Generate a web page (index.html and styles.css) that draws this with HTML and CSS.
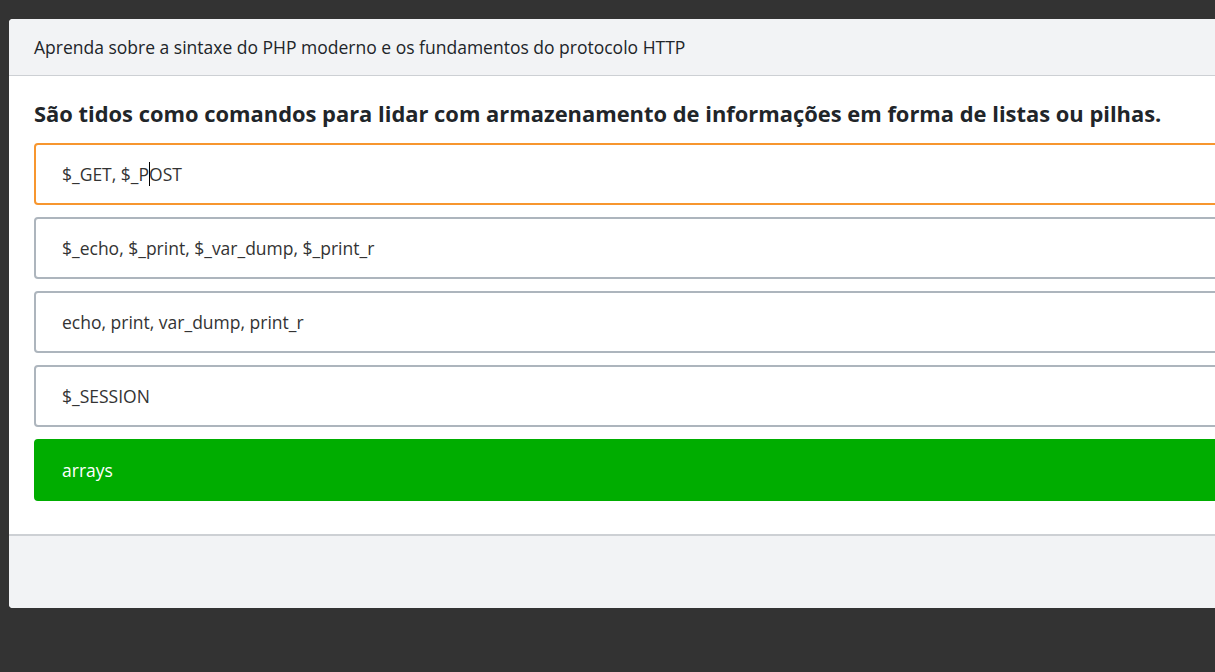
FILE: index.html
```html
<!DOCTYPE html>
<html lang="pt">
<head>
<meta charset="utf-8">
<title>Quiz PHP</title>
<link rel="stylesheet" href="styles.css">
</head>
<body>
<div class="modal">
  <div class="modal-header">Aprenda sobre a sintaxe do PHP moderno e os fundamentos do protocolo HTTP</div>
  <div class="modal-body">
    <h2 class="question">São tidos como comandos para lidar com armazenamento de informações em forma de listas ou pilhas.</h2>
    <div class="options">
      <div class="option option-focus">$_GET, $_P<span class="caret"></span>OST</div>
      <div class="option">$_echo, $_print, $_var_dump, $_print_r</div>
      <div class="option">echo, print, var_dump, print_r</div>
      <div class="option">$_SESSION</div>
      <div class="option option-correct">arrays</div>
    </div>
  </div>
  <div class="modal-footer"></div>
</div>
</body>
</html>
```
FILE: styles.css
```css
html, body {
  margin: 0;
  height: 100%;
  overflow: hidden;
}
body {
  background: #333333;
  padding: 19px 0 0 9px;
  box-sizing: border-box;
  font-family: "Open Sans", "Liberation Sans", sans-serif;
}
.modal {
  width: 1300px;
  background: #ffffff;
  border-radius: 4px;
  overflow: hidden;
}
.modal-header {
  height: 56px;
  line-height: 56px;
  padding: 0 25px;
  background: #f2f3f5;
  border-bottom: 1px solid #cdd0d4;
  font-size: 17.5px;
  color: #212529;
}
.modal-body {
  padding: 24px 25px 33px;
}
.question {
  margin: 0 0 15px;
  font-size: 21.9px;
  line-height: 28px;
  font-weight: 700;
  color: #212529;
}
.options {
  display: flex;
  flex-direction: column;
  gap: 12px;
  width: 1250px;
}
.option {
  height: 62px;
  box-sizing: border-box;
  display: flex;
  align-items: center;
  padding: 0 26px;
  border: 2px solid #adb5bd;
  border-radius: 4px;
  font-size: 17.5px;
  color: #333333;
  background: #ffffff;
}
.option-focus {
  border-color: #f7962f;
}
.option-correct {
  background: #00ad00;
  border-color: #00ad00;
  color: #ffffff;
}
.caret {
  display: inline-block;
  width: 1px;
  height: 24px;
  background: #000000;
  margin: 0 -1px 0 0;
}
.modal-footer {
  height: 72px;
  background: #f2f3f5;
  border-top: 2px solid #cdd0d4;
}
```
